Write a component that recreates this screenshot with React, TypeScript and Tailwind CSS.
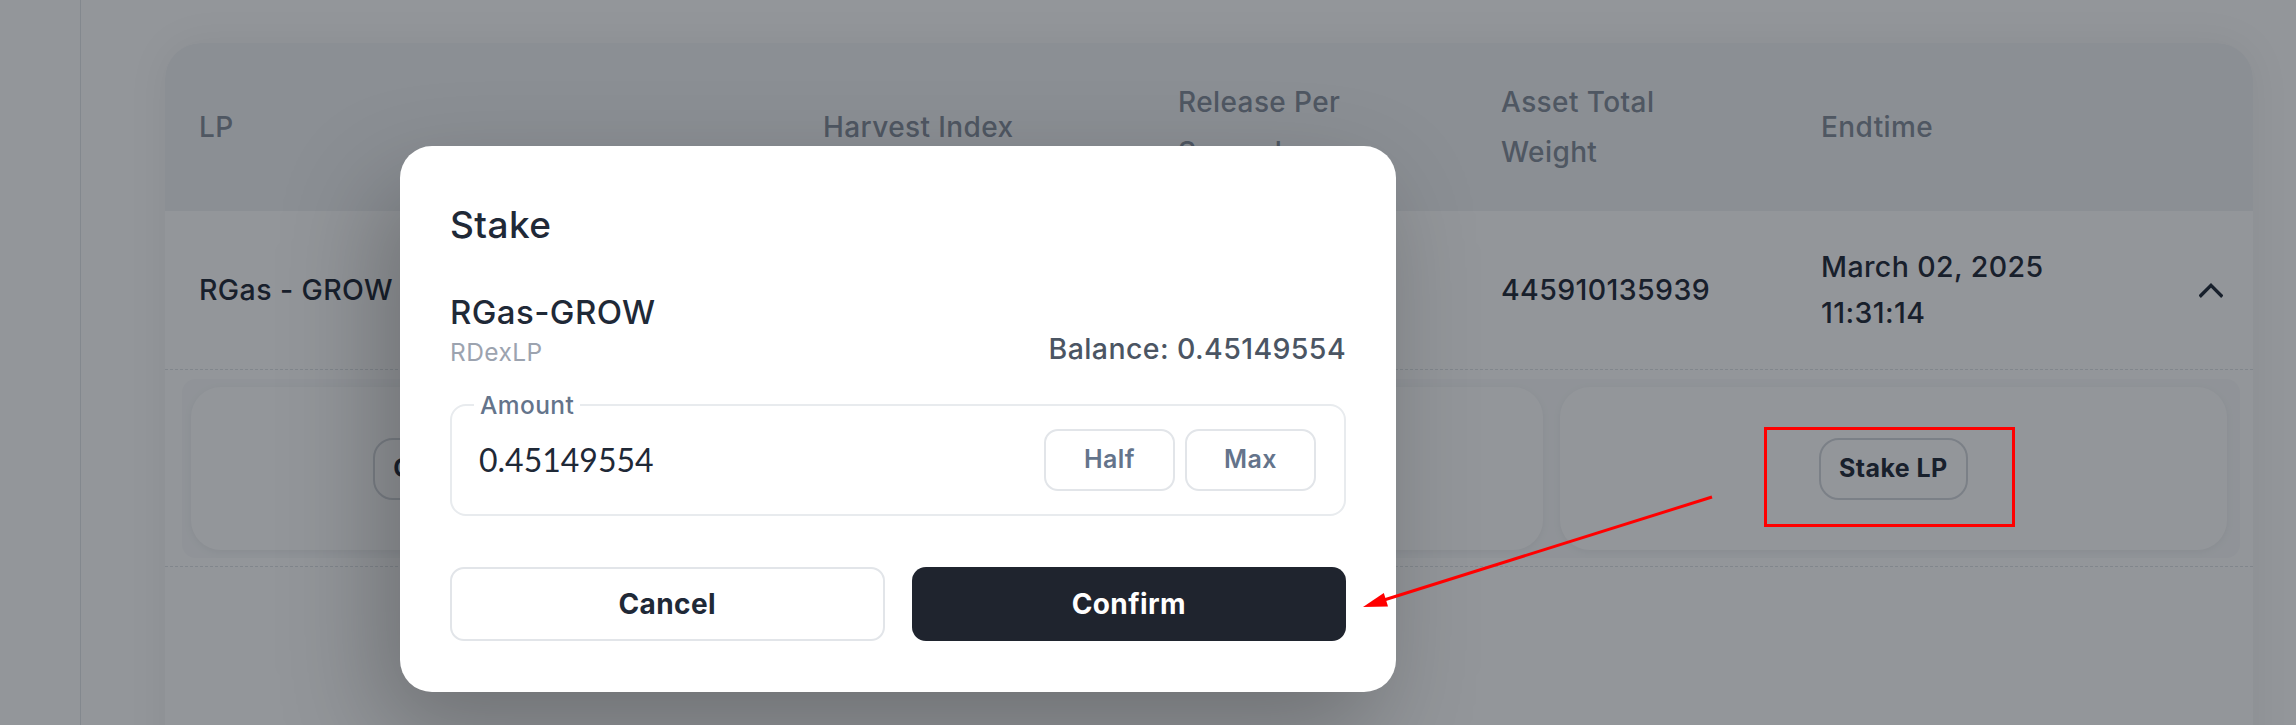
import React from "react";

function ChevronUp() {
  return (
    <svg width="26" height="18" viewBox="0 0 26 18" fill="none">
      <polyline points="2,15 13,4 24,15" stroke="#1f2937" strokeWidth="3.6" strokeLinecap="square" strokeLinejoin="miter" />
    </svg>
  );
}

export default function App() {
  return (
    <div className="relative h-[725px] w-[2296px] overflow-hidden bg-white [font-family:Inter,'Noto_Sans',sans-serif] tracking-[0.025em]">
      {/* underlying page */}
      <div className="flex h-full">
        <aside className="w-[81px] shrink-0 border-r border-[#e2e5e9]" />
        <main className="flex-1 pl-[84px] pr-[43px] pt-[43px]">
          <section className="h-[760px] overflow-hidden rounded-[36px] bg-white shadow-[0_0_40px_rgba(0,0,0,0.07)]">
            {/* header */}
            <div className="grid h-[168px] grid-cols-[624px_355px_323px_320px_1fr_24px] items-center bg-[#f1f2f4] pl-[34px] pr-[30px] text-[28px] font-medium leading-[50px] text-[#838c99]">
              <div>LP</div>
              <div className="max-w-[215px]">Harvest Index</div>
              <div className="max-w-[215px]">Release Per Second</div>
              <div className="max-w-[215px]">Asset Total Weight</div>
              <div>Endtime</div>
              <div />
            </div>
            {/* body row */}
            <div className="grid h-[159px] grid-cols-[624px_355px_323px_320px_1fr_24px] items-center border-b border-dashed border-[#dfe2e6] pl-[34px] pr-[30px] text-[28.5px] font-medium text-[#1f2937]">
              <div>RGas - GROW</div>
              <div />
              <div />
              <div>445910135939</div>
              <div className="leading-[46px]">
                <div>March 02, 2025</div>
                <div>11:31:14</div>
              </div>
              <div className="flex justify-center">
                <ChevronUp />
              </div>
            </div>
            {/* expanded */}
            <div className="border-b border-dashed border-[#dfe2e6] pb-[8px] pl-[17px] pr-[13px] pt-[9px]">
              <div className="grid grid-cols-3 gap-[17px] rounded-[14px] bg-[#f9fafb] py-[8px] pl-[9px] pr-[13px]">
                <div className="flex h-[163px] items-center justify-center rounded-[30px] bg-white shadow-[0_2px_8px_rgba(0,0,0,0.05)]">
                  <button className="h-[62px] w-[303px] rounded-[20px] border-2 border-[#d4d7dc] pl-[18px] text-left text-[25px] font-bold text-[#1f2937]">
                    Claim
                  </button>
                </div>
                <div className="flex h-[163px] items-center justify-center rounded-[30px] bg-white shadow-[0_2px_8px_rgba(0,0,0,0.05)]" />
                <div className="flex h-[163px] items-center justify-center rounded-[30px] bg-white shadow-[0_2px_8px_rgba(0,0,0,0.05)]">
                  <button className="h-[62px] rounded-[20px] border-2 border-[#d4d7dc] px-[18px] text-[25px] font-bold text-[#1f2937]">
                    Stake LP
                  </button>
                </div>
              </div>
            </div>
          </section>
        </main>
      </div>

      {/* overlay */}
      <div className="absolute inset-0 bg-[rgba(15,23,30,0.45)]" />

      {/* modal */}
      <div className="absolute left-[400px] top-[146px] w-[996px] rounded-[32px] bg-white px-[50px] pb-[51px] pt-[54px] shadow-[-20px_40px_100px_rgba(0,0,0,0.25)]">
        <h2 className="text-[37px] font-medium leading-[49px] text-[#1f2937]">Stake</h2>
        <div className="mt-[41px] flex items-end justify-between">
          <div>
            <div className="text-[33px] font-medium leading-[44px] text-[#1f2937]">RGas-GROW</div>
            <div className="text-[24.5px] leading-[36px] text-[#9ca3af]">RDexLP</div>
          </div>
          <div className="text-[28.5px] font-medium leading-[42px] text-[#4b5563]">Balance: 0.45149554</div>
        </div>
        <fieldset className="mt-[20px] rounded-[16px] border-2 border-[#e8ebee] pb-[23px] pl-[27px] pr-[28px] pt-[9px]">
          <legend className="ml-[-5px] px-[6px] text-[24.5px] font-medium leading-[30px] text-[#64748b]">Amount</legend>
          <div className="flex items-center justify-between">
            <div className="[font-family:Lato,sans-serif] text-[32px] leading-[40px] tracking-normal text-[#1f2937]">0.45149554</div>
            <div className="flex gap-[10px]">
              <button className="h-[62px] w-[131px] rounded-[14px] border-2 border-[#e2e5e9] text-[25px] font-semibold text-[#64748b]">Half</button>
              <button className="h-[62px] w-[131px] rounded-[14px] border-2 border-[#e2e5e9] text-[25px] font-semibold text-[#64748b]">Max</button>
            </div>
          </div>
        </fieldset>
        <div className="mt-[51px] grid grid-cols-2 gap-[27px]">
          <button className="h-[74px] rounded-[14px] border-2 border-[#e2e5e9] text-[28px] font-bold text-[#1f2937]">Cancel</button>
          <button className="h-[74px] rounded-[14px] bg-[#1f242e] text-[28px] font-bold text-white">Confirm</button>
        </div>
      </div>

      {/* annotations */}
      <div className="absolute left-[1764px] top-[427px] h-[100px] w-[251px] border-[3px] border-[#ff0000]" />
      <svg className="pointer-events-none absolute left-0 top-0" width="2296" height="725">
        <line x1="1712" y1="497" x2="1384" y2="600" stroke="#ff0000" strokeWidth="3" />
        <polygon points="1363,607 1388,606.5 1383.8,593.1" fill="#ff0000" />
      </svg>
    </div>
  );
}
